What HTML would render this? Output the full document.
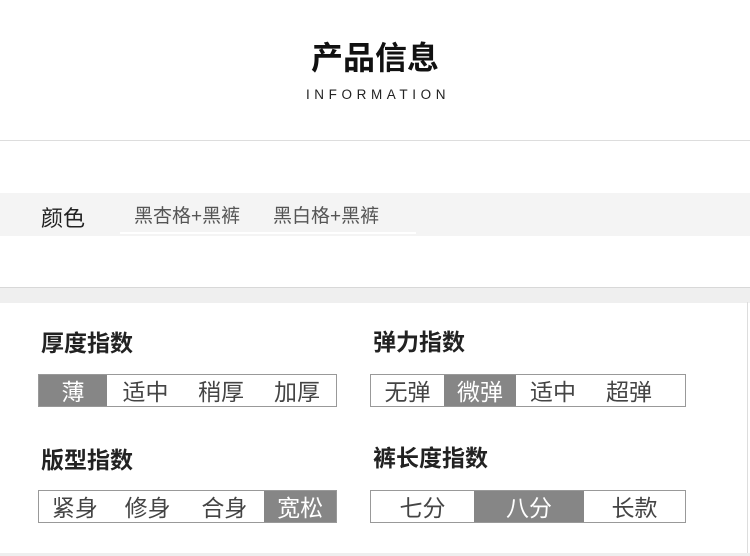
<!DOCTYPE html>
<html><head><meta charset="utf-8"><style>
body{margin:0;width:750px;height:556px;background:#fff;position:relative;overflow:hidden;font-family:"Liberation Sans","Noto Sans CJK SC",sans-serif;}
.a{position:absolute}
.t{left:0;width:750px;text-align:center;}
.h{font-size:23px;font-weight:bold;color:#222;}
.box{position:absolute;height:33px;border:1px solid #999;box-sizing:border-box;display:flex;}
.box div{height:100%;display:flex;align-items:center;justify-content:center;font-size:23px;color:#444;padding-bottom:2px;box-sizing:border-box;}
.box .on{background:#868686;color:#fff;}
</style></head><body>
<div class="a t" style="top:33px;font-size:32px;font-weight:bold;color:#111;">产品信息</div>
<div class="a t" style="top:87px;left:3px;font-size:13.5px;letter-spacing:4.6px;color:#222;">INFORMATION</div>
<div class="a" style="top:140px;left:0;width:750px;height:1px;background:#ddd"></div>
<div class="a" style="top:193px;left:0;width:750px;height:43px;background:#f4f4f4"></div>
<div class="a" style="top:232px;left:120px;width:296px;height:2px;background:#fff"></div>
<div class="a" style="top:201px;left:41px;font-size:22px;color:#222;">颜色</div>
<div class="a" style="top:201px;left:134px;font-size:19px;color:#555;">黑杏格+黑裤</div>
<div class="a" style="top:201px;left:273px;font-size:19px;color:#555;">黑白格+黑裤</div>
<div class="a" style="top:287px;left:0;width:750px;height:15px;background:#efefef;border-top:1px solid #d8d8d8"></div>
<div class="a" style="top:302px;left:747px;width:1px;height:252px;background:#ddd"></div>
<div class="a" style="top:553px;left:0;width:750px;height:3px;background:#eee"></div>
<div class="a h" style="top:324px;left:41px;">厚度指数</div>
<div class="a h" style="top:323px;left:373px;">弹力指数</div>
<div class="a h" style="top:441px;left:41px;">版型指数</div>
<div class="a h" style="top:439px;left:373px;">裤长度指数</div>
<div class="box" style="top:374px;left:38px;width:299px;"><div class="on" style="width:68px">薄</div><div style="width:77px">适中</div><div style="width:74px">稍厚</div><div style="width:78px">加厚</div></div>
<div class="box" style="top:374px;left:370px;width:316px;"><div style="width:73px">无弹</div><div class="on" style="width:72px">微弹</div><div style="width:74px">适中</div><div style="width:78px">超弹</div></div>
<div class="box" style="top:490px;left:38px;width:299px;"><div style="width:72px">紧身</div><div style="width:74px">修身</div><div style="width:80px">合身</div><div class="on" style="width:72px">宽松</div></div>
<div class="box" style="top:490px;left:370px;width:316px;"><div style="width:103px">七分</div><div class="on" style="width:110px">八分</div><div style="width:101px">长款</div></div>
</body></html>
